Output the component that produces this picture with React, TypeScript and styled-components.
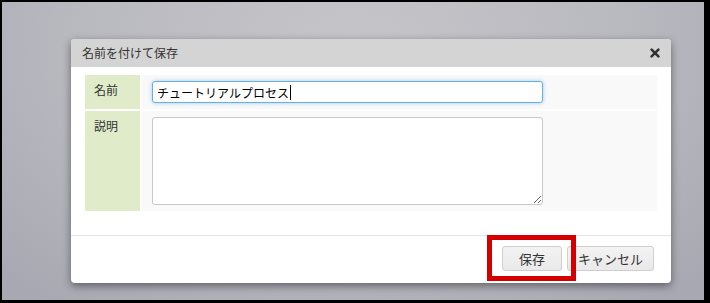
import React from "react";
import styled, { createGlobalStyle } from "styled-components";

const Global = createGlobalStyle`
  html, body { margin: 0; padding: 0; background: #000; }
  body { font-family: "Noto Sans CJK JP", "Noto Sans", sans-serif; }
  * { box-sizing: border-box; }
`;

const Frame = styled.div`
  width: 710px;
  height: 303px;
  border-style: solid;
  border-color: #000;
  border-width: 2px 6px 3px 2px;
  background: radial-gradient(ellipse 70% 110% at 50% 15%, #c5c5c9 0%, #b9b9c0 55%, #a8a8b2 100%);
  padding: 37px 0 0 69px;
  display: flex;
  align-items: flex-start;
`;

const Dialog = styled.div`
  position: relative;
  width: 600px;
  height: 244px;
  background: #fff;
  border-radius: 4px;
  box-shadow: 0 3px 9px rgba(0, 0, 0, 0.45);
  display: flex;
  flex-direction: column;
  overflow: visible;
`;

const Header = styled.div`
  height: 28px;
  background: #d4d4d4;
  border-radius: 4px 4px 0 0;
  display: flex;
  align-items: center;
  justify-content: space-between;
  padding: 0 11px 0 11px;
  font-size: 12px;
  color: #333;
`;

const Title = styled.span`
  line-height: 16px;
`;

const Close = styled.svg`
  width: 10px;
  height: 10px;
  display: block;
`;

const Body = styled.div`
  padding: 8px 14px 24px 14px;
  border-bottom: 1px solid #e5e5e5;
`;

const Table = styled.div`
  display: grid;
  grid-template-columns: 55px 1fr;
  gap: 2px;
`;

const Label = styled.div`
  background: #dfebc9;
  font-size: 12px;
  line-height: 16px;
  color: #333;
  padding: 7px 0 0 9px;
`;

const Value = styled.div`
  background: #f9f9f9;
  padding: 6px 10px;
`;

const FakeInput = styled.div`
  width: 391px;
  height: 22px;
  border: 1px solid #66afe9;
  border-radius: 3px;
  background: #fff;
  box-shadow: 0 0 4px rgba(102, 175, 233, 0.6);
  font-size: 12px;
  color: #000;
  display: flex;
  align-items: center;
  padding: 0 4px;
`;

const Caret = styled.span`
  display: inline-block;
  width: 1px;
  height: 15px;
  background: #000;
  margin-left: 1px;
`;

const TextArea = styled.textarea`
  display: block;
  width: 391px;
  height: 88px;
  border: 1px solid #c8c8c8;
  border-radius: 3px;
  background: #fff;
  margin: 0;
  font-family: inherit;
  font-size: 12px;
  outline: none;
`;

const Footer = styled.div`
  flex: 1;
  display: flex;
  justify-content: flex-end;
  align-items: flex-start;
  gap: 5px;
  padding: 10px 17px 0 0;
`;

const Button = styled.button<{ $min?: number }>`
  height: 25px;
  min-width: ${(p) => p.$min ?? 0}px;
  padding: 0 10px;
  border: 1px solid #cfcfcf;
  border-radius: 3px;
  background: linear-gradient(#f3f3f3, #e9e9e9);
  font-family: inherit;
  font-size: 13px;
  color: #333;
  line-height: 1;
`;

const Highlight = styled.div`
  position: absolute;
  left: 416px;
  top: 196px;
  width: 89px;
  height: 46px;
  border: 5px solid #d40000;
  pointer-events: none;
`;

export default function App() {
  return (
    <>
      <Global />
      <Frame>
        <Dialog>
          <Header>
            <Title>名前を付けて保存</Title>
            <Close viewBox="0 0 10 10">
              <path d="M1.6 1.6 L8.4 8.4 M8.4 1.6 L1.6 8.4" stroke="#333" strokeWidth="2.6" strokeLinecap="round" />
            </Close>
          </Header>
          <Body>
            <Table>
              <Label>名前</Label>
              <Value>
                <FakeInput>
                  チュートリアルプロセス
                  <Caret />
                </FakeInput>
              </Value>
              <Label>説明</Label>
              <Value>
                <TextArea />
              </Value>
            </Table>
          </Body>
          <Footer>
            <Button $min={60}>保存</Button>
            <Button>キャンセル</Button>
          </Footer>
          <Highlight />
        </Dialog>
      </Frame>
    </>
  );
}
